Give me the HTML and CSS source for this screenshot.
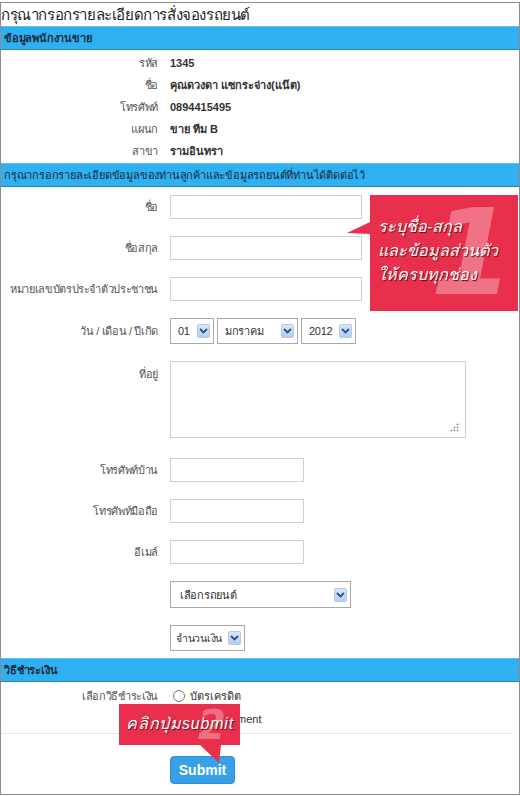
FILE: index.html
```html
<!DOCTYPE html>
<html lang="th">
<head>
  <meta charset="UTF-8">
  <meta name="viewport" content="width=device-width, initial-scale=1.0">
  <title>กรุณากรอกรายละเอียดการสั่งจองรถยนต์</title>
  <link rel="stylesheet" href="styles.css">
</head>
<body>
  <div class="page">
    <h1 class="title">กรุณากรอกรายละเอียดการสั่งจองรถยนต์</h1>

    <div class="bar bar-strong">ข้อมูลพนักงานขาย</div>
    <div class="info">
      <div class="info-row"><span class="lbl">รหัส</span><span class="val">1345</span></div>
      <div class="info-row"><span class="lbl">ชื่อ</span><span class="val">คุณดวงดา แซกระจ่าง(แน๊ต)</span></div>
      <div class="info-row"><span class="lbl">โทรศัพท์</span><span class="val">0894415495</span></div>
      <div class="info-row"><span class="lbl">แผนก</span><span class="val">ขาย ทีม B</span></div>
      <div class="info-row"><span class="lbl">สาขา</span><span class="val">รามอินทรา</span></div>
    </div>

    <div class="bar">กรุณากรอกรายละเอียดข้อมูลของท่านลูกค้าและข้อมูลรถยนต์ที่ท่านได้ติดต่อไว้</div>
    <form class="form">
      <div class="row"><label class="lbl">ชื่อ</label><input class="txt w-lg" type="text"></div>
      <div class="row"><label class="lbl">ชื่อสกุล</label><input class="txt w-lg" type="text"></div>
      <div class="row"><label class="lbl">หมายเลขบัตรประจำตัวประชาชน</label><input class="txt w-lg" type="text"></div>
      <div class="row"><label class="lbl">วัน / เดือน / ปีเกิด</label>
        <div class="dates">
          <div class="sel w-day"><select><option>01</option></select><span class="arrow"><svg width="9" height="6" viewBox="0 0 9 6"><path d="M1 1l3.5 3.5L8 1" fill="none" stroke="#2b4f8a" stroke-width="1.8"/></svg></span></div>
          <div class="sel w-month"><select><option>มกราคม</option></select><span class="arrow"><svg width="9" height="6" viewBox="0 0 9 6"><path d="M1 1l3.5 3.5L8 1" fill="none" stroke="#2b4f8a" stroke-width="1.8"/></svg></span></div>
          <div class="sel w-year"><select><option>2012</option></select><span class="arrow"><svg width="9" height="6" viewBox="0 0 9 6"><path d="M1 1l3.5 3.5L8 1" fill="none" stroke="#2b4f8a" stroke-width="1.8"/></svg></span></div>
        </div>
      </div>
      <div class="row row-top"><label class="lbl">ที่อยู่</label><textarea class="area"></textarea></div>
      <div class="row row-phone"><label class="lbl">โทรศัพท์บ้าน</label><input class="txt w-sm" type="text"></div>
      <div class="row"><label class="lbl">โทรศัพท์มือถือ</label><input class="txt w-sm" type="text"></div>
      <div class="row"><label class="lbl">อีเมล์</label><input class="txt w-sm" type="text"></div>
      <div class="row"><span class="lbl"></span>
        <div class="sel w-car"><select><option>เลือกรถยนต์</option></select><span class="arrow"><svg width="9" height="6" viewBox="0 0 9 6"><path d="M1 1l3.5 3.5L8 1" fill="none" stroke="#2b4f8a" stroke-width="1.8"/></svg></span></div>
      </div>
      <div class="row"><span class="lbl"></span>
        <div class="sel w-money"><select><option>จำนวนเงิน</option></select><span class="arrow"><svg width="9" height="6" viewBox="0 0 9 6"><path d="M1 1l3.5 3.5L8 1" fill="none" stroke="#2b4f8a" stroke-width="1.8"/></svg></span></div>
      </div>
    </form>

    <div class="bar bar-strong">วิธีชำระเงิน</div>
    <div class="pay">
      <div class="pay-row"><span class="lbl">เลือกวิธีชำระเงิน</span><label class="opt"><input type="radio" name="pay"> บัตรเครดิต</label></div>
      <div class="pay-row"><span class="lbl"></span><label class="opt"><input type="radio" name="pay"> Bank Payment</label></div>
    </div>
    <div class="actions">
      <button class="submit" type="button">Submit</button>
    </div>

    <div class="callout callout-one">
      <span class="big-num">1</span>
      <p>ระบุชื่อ-สกุล<br>และข้อมูลส่วนตัว<br>ให้ครบทุกช่อง</p>
    </div>
    <div class="callout callout-two">
      <span class="big-num">2</span>
      <p>คลิกปุ่มsubmit</p>
    </div>
  </div>
</body>
</html>
```

FILE: styles.css
```css
body { margin: 0; font-family: Tahoma, "Liberation Sans", "Noto Sans", sans-serif; font-size: 11px; color: #333; background: #fff; }
.page { position: relative; width: 520px; height: 793px; margin-top: 2px; border: 1px solid #8c8c8c; box-sizing: border-box; overflow: hidden; }

.title { margin: 0; height: 23px; font-size: 15px; line-height: 23px; letter-spacing: -0.4px; font-weight: normal; color: #222; white-space: nowrap; }

.bar { height: 24px; box-sizing: border-box; padding-left: 3px; line-height: 23px; background: #2fb0f1; border-top: 1px solid #5cc2f5; border-bottom: 1px solid #2388c2; color: #1c2b3c; font-size: 11px; letter-spacing: -0.2px; white-space: nowrap; overflow: hidden; }
.bar-strong { font-weight: bold; }

.lbl { width: 157px; flex: none; text-align: right; color: #555; white-space: nowrap; letter-spacing: -0.35px; }

.info { padding: 2px 0 1px; }
.info-row { display: flex; gap: 12px; height: 22px; align-items: center; }
.val { font-weight: bold; color: #333; }

.form { display: flex; flex-direction: column; gap: 17px; padding: 8px 0 7px; }
.row { display: flex; gap: 12px; align-items: center; }
.row-top { align-items: flex-start; }
.row-top .lbl { padding-top: 4px; }
.row-phone { margin-top: 3px; }

.txt { height: 24px; box-sizing: border-box; margin: 0; border: 1px solid #cfcfcf; padding: 2px 4px; font: inherit; }
.w-lg { width: 192px; }
.w-sm { width: 134px; }
.area { display: block; width: 296px; height: 77px; box-sizing: border-box; margin: 0; border: 1px solid #cfcfcf; font: inherit; resize: none;
  background:
    radial-gradient(circle, #999 0.8px, transparent 1.2px) right 9px bottom 5px / 3px 3px no-repeat,
    radial-gradient(circle, #999 0.8px, transparent 1.2px) right 6px bottom 5px / 3px 3px no-repeat,
    radial-gradient(circle, #999 0.8px, transparent 1.2px) right 6px bottom 8px / 3px 3px no-repeat,
    radial-gradient(circle, #999 0.8px, transparent 1.2px) right 12px bottom 5px / 3px 3px no-repeat,
    radial-gradient(circle, #999 0.8px, transparent 1.2px) right 9px bottom 8px / 3px 3px no-repeat,
    radial-gradient(circle, #999 0.8px, transparent 1.2px) right 6px bottom 11px / 3px 3px no-repeat,
    #fff; }

.dates { display: flex; gap: 3px; }
.sel { display: inline-flex; align-items: center; height: 26px; box-sizing: border-box; border: 1px solid #a9a9a9; padding: 0 3px 0 0; background: #fff; }
.sel select { flex: 1; min-width: 0; height: 100%; border: none; background: transparent; appearance: none; -webkit-appearance: none; padding: 0 0 0 7px; font: inherit; letter-spacing: -0.3px; color: #333; outline: none; }
.arrow { width: 13px; height: 14px; flex: none; box-sizing: border-box; display: flex; align-items: center; justify-content: center; background: linear-gradient(#d9e6f8, #b3cdf1); border: 1px solid #b4c9ea; border-radius: 2px; }
.w-day { width: 44px; }
.w-month { width: 81px; }
.w-year { width: 55px; }
.w-car { width: 181px; height: 27px; }
.w-car select { padding-left: 9px; }
.w-money { width: 75px; }
.w-money select { padding-left: 5px; font-size: 10.5px; }

.pay { padding-top: 2px; }
.pay-row { display: flex; gap: 12px; height: 23px; align-items: center; }
.opt { display: flex; align-items: center; gap: 5px; color: #333; }
.opt input { margin: 0 0 0 3px; width: 12px; height: 12px; }

.actions { margin: 3px 6px 0 0; padding: 22px 0 0 169px; border-top: 1px solid #e6e6e6; }
.submit { width: 65px; height: 28px; border: 1px solid #2f8fd6; border-radius: 4px; background: #37a1e8; color: #fff; font-family: Arial, "Liberation Sans", sans-serif; font-size: 14px; font-weight: bold; padding: 0; }

.callout { position: absolute; background: #e8304d; color: #fff; }
.callout p { position: relative; margin: 0; font-style: italic; text-shadow: 1px 1px 1px #5c0f1b; white-space: nowrap; }
.big-num { position: absolute; color: rgba(255,255,255,0.32); font-family: "DejaVu Sans", sans-serif; font-style: italic; font-weight: bold; line-height: 0.9; }

.callout-one { left: 369px; top: 192px; width: 148px; height: 116px; }
.callout-one p { padding: 20px 0 0 8px; font-size: 16px; line-height: 24px; }
.callout-one .big-num { right: 4px; top: 4px; font-size: 120px; }

.callout-two { left: 118px; top: 701px; width: 121px; height: 41px; }
.callout-two::before { content: ""; position: absolute; left: 81px; top: 41px; border-top: 18px solid #e8304d; border-left: 19px solid transparent; border-right: 2px solid transparent; }
.callout-two p { padding: 8px 0 0 7px; font-size: 16px; line-height: 24px; letter-spacing: 0.8px; }
.callout-two .big-num { left: 79px; top: 3px; font-size: 40px; }

.page::after { content: ""; position: absolute; left: 346px; top: 219px; border-right: 23px solid #e8304d; border-top: 11px solid transparent; border-bottom: 1px solid transparent; }
```
